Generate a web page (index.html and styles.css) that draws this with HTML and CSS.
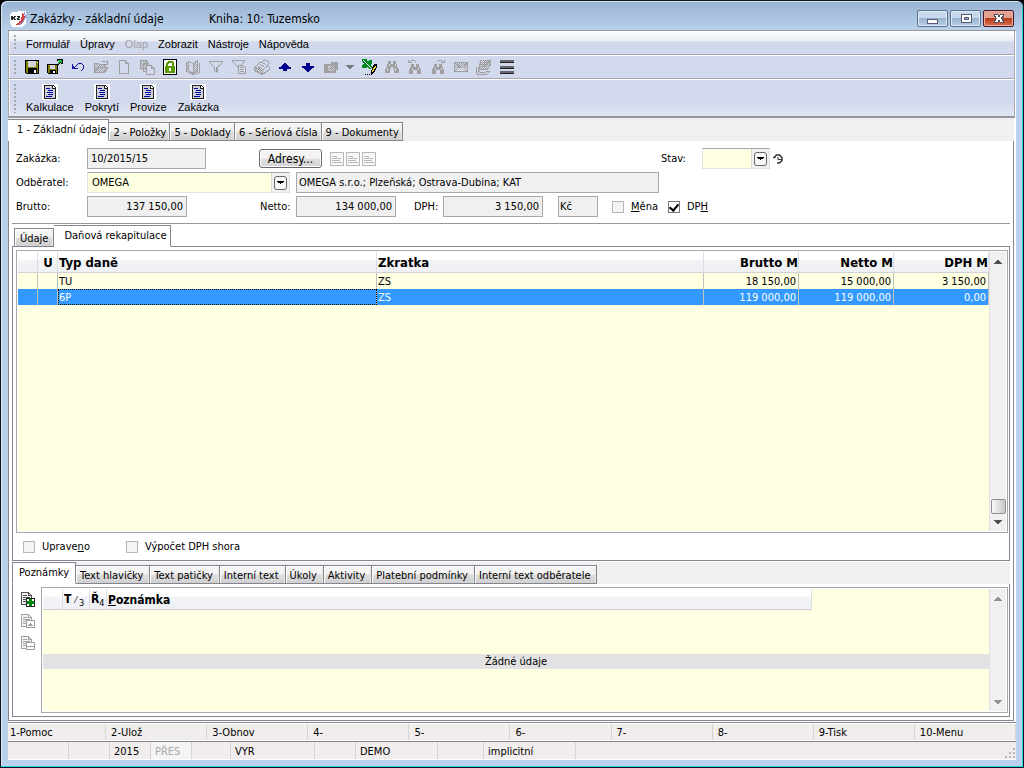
FILE: index.html
```html
<!DOCTYPE html>
<html lang="cs">
<head>
<meta charset="utf-8">
<title>Zakázky - základní údaje</title>
<link rel="stylesheet" href="styles.css">
</head>
<body>
<svg class="defs" aria-hidden="true">
  <defs>
    <pattern id="dither" width="2" height="2" patternUnits="userSpaceOnUse"><path d="M0 0h1v1h-1zM1 1h1v1h-1z" fill="#a0a0a0"/></pattern>
    <symbol id="report" viewBox="0 0 16 16"><path d="M0 0h16v16H0z" fill="#fff"/><path d="M2 1h9l3 3v11H2z" fill="#222"/><path d="M3 2h7v3h3v9H3z" fill="#d0d0d8"/><path d="M11 2v2h2z" fill="#fff"/><path d="M4 4h4v1H4zM6 6h5v1H6zM5 8h6v1H5zM6 10h5v1H6zM4 12h6v1H4z" fill="#0000a0"/></symbol>
    <symbol id="sheet" viewBox="0 0 14 14"><path d="M0 0h14v14H0z" fill="#b8b8b8"/><path d="M1 1h12v12H1z" fill="#f8f8f8"/><path d="M2 4h5v1H2zM2 6h9v1H2zM2 8h8v1H2zM2 10h10v1H2z" fill="#b8b8b8"/></symbol>
    <symbol id="up" viewBox="0 0 8 5"><path d="M3 0h2v1h1v1h1v1h1v1H0V3h1V2h1V1h1z"/></symbol>
    <symbol id="down" viewBox="0 0 8 5"><path d="M0 0h8v1H7v1H6v1H5v1H3V3H2V2H1V1H0z"/></symbol>
    <symbol id="note" viewBox="0 0 16 16"><path d="M1.500 1.500h7l3 3v9h-10z" fill="#f4f4f4" stroke="currentColor"/><path d="M8.500 1.500v3h3M3 4.500h4M3 6.500h7M3 8.500h4M3 10.500h3" fill="none" stroke="currentColor"/></symbol>
    <symbol id="binoc" viewBox="0 0 16 16"><path d="M4 2h3v3h2V2h3v3h1v3h1v2h1v4h-5v-4H9V8H7v2H6v4H1v-4h1V8h1V5h1z" fill="#a0a0a0"/><path d="M5 5h1v2H5zM11 5h1v2h-1zM3 9h1v3H3zM11 9h1v3h-1z" fill="#d3d9ec"/></symbol>
    <symbol id="binoc-small" viewBox="0 0 16 16"><path d="M4 5h3v3h2V5h3v3h1v2h1v5h-4v-4H6v4H2v-5h1V8h1z" fill="#a0a0a0"/><path d="M5 9h1v2H5zM11 9h1v2h-1z" fill="#d3d9ec"/></symbol>
  </defs>
</svg>
<div class="window">
  <header class="titlebar">
    <svg class="logo" viewBox="0 0 16 16" aria-hidden="true"><path d="M2 1 14 0h2v12l-3 4H2L0 12V4z" fill="#fff"/><path d="M12 1c4 3 4 8 0 11-2 2-5 2-7 2 5-2 8-8 7-13z" fill="#d8403c"/><path d="M14 1c3 5 0 11-5 13" fill="none" stroke="#8c8ce0"/><path d="M0 4h11v6H0z" fill="#fff"/><path d="M1 5h2v1h1V5h2v1H5v2h1v1H4V8H3v1H1zM7 5h3v2H9v1h1v1H7V7h1V6H7z" fill="#282828"/></svg>
    <h1 class="title">Zakázky - základní údaje</h1>
    <span class="book">Kniha: 10: Tuzemsko</span>
    <div class="controls">
      <button class="wbtn" aria-label="Minimalizovat"><svg viewBox="0 0 12 10"><path d="M.5 5.500h10v4H.5z" fill="#fff" stroke="#555a70"/></svg></button>
      <button class="wbtn" aria-label="Maximalizovat"><svg viewBox="0 0 12 10"><path d="M1.500.5h10v8h-10z" fill="#fff" stroke="#555a70"/><path d="M4.500 3.500h4v2h-4z" fill="#8fb0d4" stroke="#555a70"/></svg></button>
      <button class="wbtn wclose" aria-label="Zavřít"><svg viewBox="0 0 12 10"><path d="M1.500.5h3L6 2.500 7.500.5h3v1.500L8.300 4.500l2.200 2.500v1.500h-3L6 6.500 4.500 8.500h-3V7l2.200-2.500L1.500 2z" fill="#fff" stroke="#4c4860"/></svg></button>
    </div>
  </header>
  <div class="client">
    <nav class="menubar bar">
      <button class="menu">Formulář</button><button class="menu">Úpravy</button><button class="menu" disabled>Olap</button><button class="menu">Zobrazit</button><button class="menu">Nástroje</button><button class="menu">Nápověda</button>
    </nav>
    <div class="toolbar bar">
      <button class="tool" aria-label="Uložit"><svg viewBox="0 0 16 16"><path d="M1.500 1.500h13v13h-12l-1-1z" fill="#808000" stroke="#000"/><path d="M4 2h8v6H4z" fill="#d4d4d8"/><path d="M4 9h9v5H4z" fill="#000"/><path d="M10 11h2v3h-2zM13 3h1v1h-1z" fill="#fff"/></svg></button>
      <button class="tool" aria-label="Uložit a zavřít"><svg viewBox="0 0 16 16"><path d="M.5 5.500h10v9h-9l-1-1z" fill="#808000" stroke="#000"/><path d="M3 6h5v4H3z" fill="#d4d4d8"/><path d="M3 11h6v3H3z" fill="#000"/><path d="M6 12h2v2H6z" fill="#fff"/><path d="M10 0h6v5h-2V3l-3 3-1-1 3-3h-3z" fill="#000"/><path d="M11 1h4v3h-1V2l-3 3-1-1 3-2h-2z" fill="#18c030"/></svg></button>
      <button class="tool" aria-label="Zpět"><svg viewBox="0 0 16 16"><path d="M2 5h1v2h1v1h1V7h1V6h1V5h1V4h4v1h1v1h1v4h-1v1h-1v1h-1v-1h1v-1h1V6h-1V5H8v1H7v1H6v1H5v1h3v1H2z" fill="#1818a0"/></svg></button>
      <button class="tool" aria-label="Otevřít"><svg viewBox="0 0 16 16"><path d="M1 4h5v2h7v2h3l-4 6H1z" fill="url(#dither)"/><path d="M1.500 13V4.500h4l1 1h5v2M2 13.500l3-5.500h10l-4 5.500zM9 3V2h3l2 2M14.500 1v4H11" fill="none" stroke="#a0a0a0"/></svg></button>
      <button class="tool" aria-label="Nový"><svg viewBox="0 0 16 16"><path d="M3.500 1.500h6l3 3v10h-9zM9.500 1.500v3h3" fill="none" stroke="#a0a0a0"/></svg></button>
      <button class="tool" aria-label="Kopírovat"><svg viewBox="0 0 16 16"><path d="M1 1h8v10H1z" fill="url(#dither)"/><path d="M1.500 1.500h5l2 2v6h-7zM4.500 4.500h5l2 2v6h-7z" fill="none" stroke="#a0a0a0"/><path d="M7.500 6.500h5l3 3v6h-8zM12.500 6.500v3h3" fill="#d3d9ec" stroke="#a0a0a0"/></svg></button>
      <button class="tool" aria-label="Zámek"><svg viewBox="0 0 16 16"><path d="M1.500.5h13v15h-13z" fill="#fff" stroke="#000"/><path d="M3 7h1V4l2-2h4l2 2v3h1v7H3zM6 5v2h4V5L9 4H7z" fill="#589800" fill-rule="evenodd"/><path d="M7 9h2v3H7z" fill="#fff"/></svg></button>
      <button class="tool" aria-label="Kniha"><svg viewBox="0 0 16 16"><path d="M1 3h3v10H1zM9 4h4v9H9z" fill="url(#dither)"/><path d="M1.500 3.500v9l3 1 4 2 6-2v-9h-1M3.500 2.500v9l5 3v-10zM8.500 4.500l4-3v10l-4 3" fill="none" stroke="#a0a0a0"/></svg></button>
      <button class="tool" aria-label="Filtr"><svg viewBox="0 0 16 16"><path d="M1.500 2.500h13v1l-5 5v5l-3-2V8.500l-5-5z" fill="none" stroke="#a0a0a0"/><path d="M10 6h1v1h-1zM8 8h1v5H8z" fill="#a0a0a0"/></svg></button>
      <button class="tool" aria-label="Filtr záznamů"><svg viewBox="0 0 16 16"><path d="M1.500 1.500h12v1l-4 4v3l-3-1V7.500l-5-5z" fill="none" stroke="#a0a0a0"/><path d="M7.500 6.500h4l3 2v6h-7z" fill="#d3d9ec" stroke="#a0a0a0"/><path d="M9 8.500h3M9 10.500h4M9 12.500h4" stroke="#a0a0a0"/></svg></button>
      <button class="tool" aria-label="Tisk"><svg viewBox="0 0 16 16"><path d="M1 8h7v6L1 11z" fill="url(#dither)"/><path d="M.5 8.500l5-5h2l3-3 5 3-2 3 2 2v2l-7 5-8-4zM1 8.500l7 3 6-5M8 12v3M8 3.500l4 2M6 5.500l4 2M4 7.500l3 1.500" fill="none" stroke="#a0a0a0"/></svg></button>
      <button class="tool" aria-label="Předchozí"><svg viewBox="0 0 16 16"><path d="M7 4h2v1h1v1h1v1h1v1h2v2h-4v2H6v-2H2V8h2V7h1V6h1V5h1z" fill="#000090"/></svg></button>
      <button class="tool" aria-label="Další"><svg viewBox="0 0 16 16"><path d="M7 13h2v-1h1v-1h1v-1h1V9h2V7h-4V4H6v3H2v2h2v1h1v1h1v1h1z" fill="#000090"/></svg></button>
      <button class="tool" aria-label="Snímek"><svg viewBox="0 0 16 16"><path d="M1 5h7V3h7v8h-2v3H1zM5 7v5h6V7z" fill="#a0a0a0" fill-rule="evenodd"/><path d="M6 7h5v5H5z" fill="url(#dither)"/><path d="M7 9l1 1 2-2" fill="none" stroke="#a0a0a0"/></svg></button>
      <button class="tool narrow" aria-label="Možnosti snímku"><svg viewBox="0 0 8 16"><path d="M0 6h8v1H7v1H6v1H5v1H3V9H2V8H1V7H0z" fill="#787880"/></svg></button>
      <button class="tool" aria-label="Export do Excelu"><svg viewBox="0 0 16 16"><path d="M1 0h5v1l1 2 1-2h3v3L9 6l2 2v2H8L7 8l-2 1H1V6l2-1-2-2z" fill="#008a20"/><path d="M2 1l9 9" stroke="#fff"/><path d="M13 5h3v3l-3 6-3 2v-4z" fill="#000"/><path d="M14 7h1v1l-3 5h-1v-1z" fill="#f0e020"/><path d="M4 15h1v1H4zM6 15h1v1H6zM8 15h1v1H8z" fill="#000"/></svg></button>
      <button class="tool" aria-label="Hledat"><svg><use href="#binoc"/></svg></button>
      <button class="tool" aria-label="Hledat předchozí"><svg viewBox="0 0 16 16"><use href="#binoc-small"/><path d="M1 1h1v2h1V2h1V1h4v1h1v1H8V2H4v1h1v1H1z" fill="#a0a0a0"/></svg></button>
      <button class="tool" aria-label="Hledat další"><svg viewBox="0 0 16 16"><use href="#binoc-small"/><path d="M15 1h-1v2h-1V2h-1V1H8v1H7v1h1V2h4v1h-1v1h4z" fill="#a0a0a0"/></svg></button>
      <button class="tool" aria-label="Zpráva"><svg viewBox="0 0 16 16"><path d="M2 4h12v5H2z" fill="url(#dither)"/><path d="M1.500 3.500h13v9h-13zM2 4l5 4h2l5-4M2 12l4-4M14 12l-4-4" fill="none" stroke="#a0a0a0"/></svg></button>
      <button class="tool" aria-label="Poznámky"><svg viewBox="0 0 16 16"><path d="M4 1h11v7l-4 3H2z" fill="url(#dither)"/><path d="M4.500 1v4l-2 5.500h9l3-5V1.500h-5M7 3.500h4M6 5.500h4M6 7.500h3M8 9l6-7M.5 7.500v7l2 1h8l3-3h-3l-1 1h-6l-1-2" fill="none" stroke="#a0a0a0"/></svg></button>
      <button class="tool" aria-label="Seznam"><svg viewBox="0 0 16 16"><path d="M1 1h14v2H1zM1 7h14v2H1zM1 12h14v2H1z" fill="#68686c"/><path d="M1 3h14v1H1zM1 9h14v1H1zM1 14h14v1H1z" fill="#202020"/></svg></button>
    </div>
    <div class="shortcuts bar">
      <button class="short"><svg><use href="#report"/></svg>Kalkulace</button>
      <button class="short"><svg><use href="#report"/></svg>Pokrytí</button>
      <button class="short"><svg><use href="#report"/></svg>Provize</button>
      <button class="short"><svg><use href="#report"/></svg>Zakázka</button>
    </div>

    <div class="tabs tabs-main" role="tablist">
      <button class="tab active" role="tab" aria-selected="true">1 - Základní údaje</button><button class="tab" role="tab">2 - Položky</button><button class="tab" role="tab">5 - Doklady</button><button class="tab" role="tab">6 - Sériová čísla</button><button class="tab" role="tab">9 - Dokumenty</button>
    </div>
    <main class="page">
      <form class="form">
        <div class="row">
          <label class="lead" for="order">Zakázka:</label>
          <input class="field w-order" id="order" value="10/2015/15" readonly>
          <button class="push" type="button">Adresy...</button>
          <span class="sheets"><svg><use href="#sheet"/></svg><svg><use href="#sheet"/></svg><svg><use href="#sheet"/></svg></span>
          <label class="lab-state" for="state">Stav:</label>
          <span class="combo w-state"><select id="state"><option></option></select><span class="drop"><svg><use href="#down"/></svg></span></span>
          <svg class="clock" viewBox="0 0 10 12"><path d="M.5 5 3.500 2h3l2.500 2.500v3L6.500 10H4" fill="none" stroke="#333" stroke-width="1.500"/><path d="M0 4.500h2.500M5 4v2.500h3.500" fill="none" stroke="#333"/></svg>
        </div>
        <div class="row">
          <label class="lead" for="customer">Odběratel:</label>
          <span class="combo w-customer"><select id="customer"><option>OMEGA</option></select><span class="drop"><svg><use href="#down"/></svg></span></span>
          <input class="field w-address" aria-label="Adresa odběratele" value="OMEGA s.r.o.; Plzeňská; Ostrava-Dubina; KAT" readonly>
        </div>
        <div class="row">
          <label class="lead" for="gross">Brutto:</label>
          <input class="field num" id="gross" value="137 150,00" readonly>
          <label class="lab-net" for="net">Netto:</label>
          <input class="field num" id="net" value="134 000,00" readonly>
          <label class="lab-vat" for="vat">DPH:</label>
          <input class="field num" id="vat" value="3 150,00" readonly>
          <input class="field w-cur" aria-label="Měna částky" value="Kč" readonly>
          <label class="check"><input type="checkbox" disabled><span><u>M</u>ěna</span></label>
          <label class="check check-on"><input type="checkbox" checked><span>DP<u>H</u></span></label>
        </div>
      </form>

      <div class="tabs tabs-detail" role="tablist">
        <button class="tab" role="tab">Údaje</button><button class="tab active" role="tab" aria-selected="true">Daňová rekapitulace</button>
      </div>
      <section class="panel detail">
        <div class="grid">
          <div class="grid-body">
            <table class="taxes">
              <colgroup><col class="c-mark"><col class="c-mark"><col class="c-type"><col><col class="c-num"><col class="c-num"><col class="c-num"></colgroup>
              <thead><tr><th></th><th class="mid">U</th><th>Typ daně</th><th>Zkratka</th><th class="r">Brutto M</th><th class="r">Netto M</th><th class="r">DPH M</th></tr></thead>
              <tbody>
                <tr><td></td><td></td><td>TU</td><td>ZS</td><td class="r">18 150,00</td><td class="r">15 000,00</td><td class="r">3 150,00</td></tr>
                <tr class="selected"><td></td><td></td><td class="focus">6P</td><td>ZS</td><td class="r">119 000,00</td><td class="r">119 000,00</td><td class="r">0,00</td></tr>
              </tbody>
            </table>
          </div>
          <div class="scroll"><svg><use href="#up"/></svg><i class="thumb"></i><svg><use href="#down"/></svg></div>
        </div>
        <div class="options">
          <label class="check"><input type="checkbox" disabled><span>Uprave<u>n</u>o</span></label>
          <label class="check"><input type="checkbox" disabled><span>Výpočet DPH shora</span></label>
        </div>
      </section>

      <div class="tabs tabs-notes" role="tablist">
        <button class="tab active" role="tab" aria-selected="true">Poznámky</button><button class="tab" role="tab">Text hlavičky</button><button class="tab" role="tab">Text patičky</button><button class="tab" role="tab">Interní text</button><button class="tab" role="tab">Úkoly</button><button class="tab" role="tab">Aktivity</button><button class="tab" role="tab">Platební podmínky</button><button class="tab" role="tab">Interní text odběratele</button>
      </div>
      <section class="panel notes">
        <div class="side">
          <button class="tool dark" aria-label="Nová poznámka"><svg viewBox="0 0 16 16"><use href="#note"/><path d="M6.500 7.500h8v8h-8z" fill="#fff" stroke="#222"/><path d="M9 8h3v2h2v3h-2v2H9v-2H7v-3h2z" fill="#008a10"/></svg></button>
          <button class="tool" aria-label="Změnit poznámku"><svg viewBox="0 0 16 16"><use href="#note"/><path d="M6.500 7.500h8v7h-8z" fill="#fff" stroke="#a0a0a0"/><path d="M8 12h1v-1h1v-1h1v1h1v1h1v1H8z" fill="#a0a0a0"/></svg></button>
          <button class="tool" aria-label="Smazat poznámku"><svg viewBox="0 0 16 16"><use href="#note"/><path d="M6.500 7.500h8v7h-8zM7 11.500h7" fill="#fff" stroke="#a0a0a0"/></svg></button>
        </div>
        <div class="grid">
          <div class="grid-body">
            <table class="notelist">
              <colgroup><col class="n-mark"><col class="n-type"><col class="n-row"><col></colgroup>
              <thead><tr><th></th><th>T <small>⁄ <sub>3</sub></small></th><th>Ř<sub>4</sub></th><th><u>P</u>oznámka</th></tr></thead>
            </table>
            <p class="empty">Žádné údaje</p>
          </div>
          <div class="scroll idle"><svg><use href="#up"/></svg><svg><use href="#down"/></svg></div>
        </div>
      </section>
    </main>

    <footer class="footer">
      <div class="keys"><button>1-Pomoc</button><button>2-Ulož</button><button>3-Obnov</button><button>4-</button><button>5-</button><button>6-</button><button>7-</button><button>8-</button><button>9-Tisk</button><button>10-Menu</button></div>
      <div class="status"><span></span><span></span><span>2015</span><span class="off">PŘES</span><span></span><span>VYR</span><span></span><span>DEMO</span><span></span><span>implicitní</span><span class="last"><svg viewBox="0 0 10 10"><path d="M8 0h2v2H8zM4 4h2v2H4zM8 4h2v2H8zM0 8h2v2H0zM4 8h2v2H4zM8 8h2v2H8z" fill="#b8b8b8"/></svg></span></div>
    </footer>
  </div>
</div>
</body>
</html>
```
FILE: styles.css
```css
* { box-sizing: border-box; }
html, body { height: 100%; margin: 0; background: #000; }
body { font: 11px/14px "DejaVu Sans Condensed", "DejaVu Sans", sans-serif; color: #000; }
button, input, select { font: inherit; color: inherit; margin: 0; padding: 0; border: 0; background: none; border-radius: 0; white-space: nowrap; }
svg { display: block; flex: none; shape-rendering: crispEdges; }
.defs { position: absolute; width: 0; height: 0; }

.window { height: 100vh; display: flex; flex-direction: column; padding: 0 7px; border: 1px solid #101418; border-radius: 7px 7px 0 0; background: linear-gradient(#98b3d3, #b9d1ea 30px); box-shadow: inset -1px -1px #2cd0ea, inset 1px 1px #d8e6f4; }
.window { padding-bottom: 7px; }
.titlebar { display: flex; align-items: center; height: 29px; padding: 6px 2px 0 2px; flex: none; }
.logo { width: 16px; height: 16px; margin-right: 4px; }
.title { font: inherit; margin: 0; width: 179px; font-size: 12px; }
.book { font-size: 12px; }
.controls { margin-left: auto; display: flex; gap: 2px; }
.wbtn { width: 31px; height: 17px; display: grid; place-items: center; border: 1px solid #5e7290; border-radius: 2px; background: linear-gradient(#c5d8ec 45%, #98b2ce 50%, #b7d0e6); box-shadow: inset 0 0 0 1px #dce9f6; }
.wbtn svg { width: 12px; height: 10px; }
.wclose { border-color: #4a1420; background: linear-gradient(#e2a090 45%, #b83c20 50%, #d87048); box-shadow: inset 0 0 0 1px #eab0a4; }

.client { flex: 1; min-height: 0; display: flex; flex-direction: column; border-top: 1px solid #96969c; background: #fff; }
.bar { flex: none; display: flex; position: relative; align-items: center; padding-left: 16px; margin-right: 1px; background: #d3d9ec; border-right: 1px solid #a8a8ac; border-bottom: 1px solid #a8a8ac; border-left: 1px solid #a8a8ac; box-shadow: inset 1px 0 #f4f4f8; }
.bar::before { content: ""; position: absolute; left: 5px; top: 4px; bottom: 3px; width: 2px; background: repeating-linear-gradient(#a4a8b4 0 2px, transparent 2px 4px); }
.menubar { height: 24px; gap: 10px; padding-left: 17px; padding-top: 2px; background: linear-gradient(#fff, #e8ecf5 10px, #d3d9ec 11px); font-family: "Liberation Sans", Arial, sans-serif; }
.menu:disabled { color: #a0a0a8; }
.toolbar { height: 24px; gap: 7px; padding-left: 15px; border-top: 1px solid #fff; }
.tool { width: 16px; height: 16px; color: #a0a0a0; flex: none; }
.tool svg { width: 16px; height: 16px; }
.narrow, .narrow svg { width: 8px; }
.dark { color: #505050; }
.shortcuts { height: 39px; gap: 11px; padding-left: 17px; align-items: flex-start; padding-top: 4px; border-top: 1px solid #fff; border-bottom: 2px solid #96969c; background: linear-gradient(#d3d9ec 65%, #e2e7f5); font: 11px/13px "Liberation Sans", Arial, sans-serif; }
.short { display: flex; flex-direction: column; align-items: center; gap: 1px; }
.short svg { width: 16px; height: 16px; }

.tabs { flex: none; display: flex; align-items: flex-end; position: relative; z-index: 1; margin-bottom: -1px; }
.tab { height: 19px; padding: 2px 4px 0 5px; border: 1px solid #85858f; border-left-width: 0; background: linear-gradient(#f4f4f4 45%, #dcdcdc 55%, #d0d0d0); box-shadow: inset 1px 1px #fff, inset -1px 0 #e8e8e8; }
.tab.active { height: 22px; padding: 0 3px 0 10px; background: #fff; border-bottom-color: #fff; box-shadow: none; }
.tabs-main { height: 23px; margin-right: 2px; background: #f0f0f0; }
.tabs-main .tab { padding-left: 4px; padding-right: 3px; }
.tabs-main .active { padding-left: 9px; padding-right: 2px; }

.page { flex: 1; min-height: 0; display: flex; flex-direction: column; margin-right: 2px; padding: 0 3px 3px; border: 1px solid #85858f; }
.form { flex: none; display: flex; flex-direction: column; gap: 3px; padding: 7px 0 6px 4px; border-bottom: 1px solid #96969c; }
.row { display: flex; align-items: center; height: 21px; }
.lead { width: 71px; }
.field { height: 21px; padding: 0 3px; border: 1px solid #a8a8ac; background: #f0f0f0; outline: 0; }
.num { width: 100px; text-align: right; }
.w-order { width: 119px; }
.w-address { width: 363px; margin-left: 6px; padding-left: 2px; }
.w-cur { width: 40px; margin: 0 14px 0 15px; padding-left: 1px; }
.push { width: 63px; height: 19px; margin: 0 8px 0 53px; border: 1px solid #68686c; border-radius: 3px; background: linear-gradient(#f4f4f4 45%, #dfdfdf 55%, #d2d2d2); box-shadow: inset 0 0 0 1px #fff; font-size: 12px; }
.sheets { display: flex; gap: 2px; }
.sheets svg { width: 14px; height: 14px; }
.lab-state { margin-left: 285px; width: 41px; }
.lab-net { width: 36px; margin-left: 73px; }
.lab-vat { width: 29px; margin-left: 18px; }
.combo { position: relative; height: 21px; border: 1px solid #e2e2e6; border-top-color: #a8a8ac; background: #ffffe1; display: flex; }
.combo select { appearance: none; flex: 1; min-width: 0; padding: 0 20px 0 4px; outline: 0; }
.w-state { width: 68px; }
.w-customer { width: 203px; }
.drop { position: absolute; right: 0; top: 0; bottom: 0; width: 18px; background: #f0f0f0; border-left: 1px solid #d8d8d8; display: grid; place-items: center; pointer-events: none; }
.drop svg { width: 13px; height: 14px; padding: 4px 2px; border: 1px solid #68686c; border-radius: 3px; background: #f8f8f8; }
.clock { width: 10px; height: 12px; margin-left: 3px; shape-rendering: auto; }
.check { display: flex; align-items: center; gap: 7px; }
.check input { appearance: none; width: 12px; height: 12px; border: 1px solid #b8b8bc; background: #f4f4f4; display: grid; place-items: center; }
.check-on { margin-left: 10px; }
.check input:checked { border-color: #76767c; background: #fff; }
.check input:checked::before { content: ""; width: 4px; height: 7px; margin-bottom: 2px; border: solid #000; border-width: 0 2px 2px 0; transform: rotate(40deg); }

.panel { border: 1px solid #85858f; padding: 3px 1px 3px 3px; }
.tabs-detail { height: 23px; padding-left: 2px; }
.tabs-detail .tab:first-child { border-left-width: 1px; padding-right: 5px; }
.detail { flex: 1; min-height: 0; display: flex; flex-direction: column; padding-bottom: 0; }
.grid { flex: 1; min-width: 0; min-height: 0; display: flex; border: 1px solid #a8a8ac; padding: 1px; }
.grid-body { flex: 1; min-width: 0; background: #ffffe1; }
.scroll { width: 17px; flex: none; display: flex; flex-direction: column; align-items: center; padding: 8px 0 6px; background: #f0f0f0; border-left: 1px solid #e0e0e0; }
.scroll svg { width: 8px; height: 5px; fill: #505050; }
.scroll svg:last-child { margin-top: auto; }
.idle svg { fill: #909090; }
.thumb { width: 15px; height: 15px; margin-top: auto; border: 1px solid #909090; border-radius: 2px; background: linear-gradient(90deg, #f8f8f8, #c8c8cc); }
.thumb + svg:last-child { margin-top: 6px; }
table { border-collapse: separate; border-spacing: 0; table-layout: fixed; width: 100%; }
th { height: 21px; padding: 2px 0 0 1px; text-align: left; font: bold 12px/14px "DejaVu Sans Condensed", "DejaVu Sans", sans-serif; white-space: nowrap; background: linear-gradient(#fff 35%, #f3f4f7 40%, #eef0f4); border-bottom: 1px solid #d0d2d8; border-right: 1px solid #dcdee4; }
.taxes th { font-size: 13px; }
td { height: 16px; padding: 1px 2px 0 1px; line-height: 14px; border-right: 1px solid #c0c0c0; }
.r { text-align: right; }
th.r { padding-right: 0; }
.mid { text-align: center; }
.c-mark { width: 20px; }
.c-type { width: 319px; }
.c-num { width: 95px; }
.selected td { background: #3399ff; color: #fff; }
.selected .focus { outline: 1px dotted #000; outline-offset: -1px; }
.options { flex: none; height: 27px; display: flex; align-items: center; gap: 36px; padding-left: 7px; }

.tabs-notes { height: 22px; margin-top: 1px; background: #f0f0f0; }
.tabs-notes .tab { padding-left: 4px; padding-right: 6px; }
.tabs-notes .active { padding-left: 6px; border-left-width: 1px; }
.notes { flex: none; height: 134px; display: flex; }
.side { width: 25px; flex: none; display: flex; flex-direction: column; gap: 6px; padding: 4px 0 0 4px; }
.notelist { width: calc(100% - 177px); }
.n-mark { width: 20px; }
.n-type { width: 27px; }
.n-row { width: 17px; }
.notelist small, .notelist sub { font-size: 9px; font-weight: normal; line-height: 9px; }
.empty { margin: 44px 0 0; height: 15px; line-height: 15px; text-align: center; background: #e2e2e2; }

.footer { flex: none; margin-top: 1px; border-top: 1px solid #85858f; }
.keys, .status { display: flex; background: #f0edec; border: 1px solid #fff; border-width: 1px 0; }
.keys { height: 18px; }
.keys button { flex: 1 1 0; text-align: left; padding: 1px 0 0 5px; border-right: 1px solid #d4d4d4; }
.keys button:first-child { padding-left: 2px; }
.status { height: 19px; border-top: 1px solid #85858f; line-height: 19px; }
.status span { width: 41px; padding-left: 4px; border-right: 1px solid #d4d4d4; }
.status span:first-child { width: 61px; }
.status .off { color: #a8a8a8; background: #f4f4f4; }
.status span:nth-child(5) { width: 39px; }
.status span:nth-child(6) { width: 84px; }
.status span:nth-child(8) { width: 82px; }
.status span:nth-child(9) { width: 46px; }
.status span:nth-child(10) { width: 92px; }
.status .last { flex: 1; border: 0; display: flex; justify-content: flex-end; align-items: flex-end; padding: 0 1px 1px 0; }
.last svg { width: 10px; height: 10px; }
```
